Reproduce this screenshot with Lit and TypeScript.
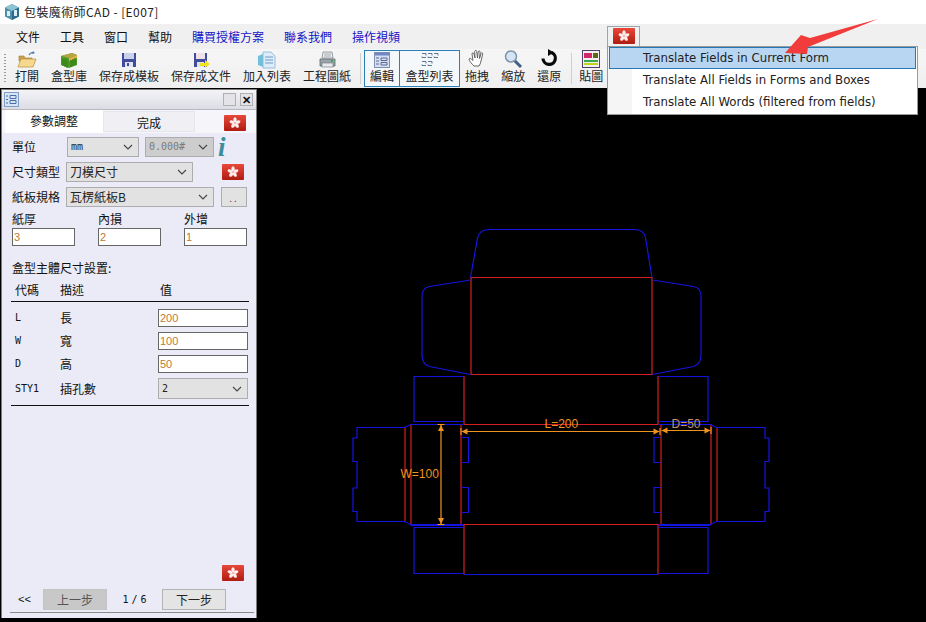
import { LitElement, html, css, svg } from "lit";
import { customElement } from "lit/decorators.js";

const flower = html`<svg class="petals" viewBox="0 0 22 16">
  ${[0, 72, 144, 216, 288].map(
    (a) => svg`<path transform="rotate(${a} 11 8)" d="M11 8C8.800 6.600 8.700 3.800 10.600 2.300C12.800 2.500 13.800 5.200 11 8Z" fill="#fdeeee"/>`
  )}
  <circle cx="11" cy="8" r="1" fill="#f4a8a0"/>
</svg>`;

const chevron = html`<svg class="chev" viewBox="0 0 10 6"><path d="M1 1l4 4 4-4" fill="none" stroke="#444" stroke-width="1.1"/></svg>`;

const icons: Record<string, unknown> = {
  open: svg`<svg viewBox="0 0 20 18" width="20" height="18">
    <path d="M12 4c1-2 3-3 5-2" fill="none" stroke="#4a7fb0" stroke-width="1.2"/><path d="M16 0l2 2-3 1z" fill="#4a7fb0"/>
    <path d="M2 5h5l1 2h7v3H2z" fill="#c9a24e" stroke="#a07c30" stroke-width=".6"/>
    <path d="M1 16l3-8h15l-3 8z" fill="#f6d98e" stroke="#b58f3e" stroke-width=".7"/></svg>`,
  box: svg`<svg viewBox="0 0 20 18" width="20" height="18">
    <path d="M2 5l11-3 5 2v10l-8 3-8-3z" fill="#4f9a26"/>
    <path d="M2 5l8 2 8-3-5-2z" fill="#b9a445"/>
    <path d="M10 7l8-3v3l-8 3z" fill="#e0b040"/>
    <path d="M4 8v7M6 8v8M8 9v8M12 9v7M14 8v7M16 7v7" stroke="#2d7a12" stroke-width="1"/></svg>`,
  save: svg`<svg viewBox="0 0 20 18" width="20" height="18">
    <rect x="3" y="2" width="14" height="14" fill="#3f4d9c"/><rect x="5" y="2" width="10" height="6" fill="#c9d2ea"/>
    <rect x="6" y="11" width="8" height="5" fill="#dfe3ee"/><rect x="8" y="12" width="2" height="3" fill="#3f4d9c"/></svg>`,
  saveAs: svg`<svg viewBox="0 0 20 18" width="20" height="18">
    <rect x="3" y="2" width="13" height="14" fill="#3f4d9c"/><rect x="5" y="2" width="9" height="6" fill="#f0e0e8"/>
    <rect x="6" y="11" width="7" height="5" fill="#dfe3ee"/>
    <path d="M9 12h5v-3l5 4-5 4v-2H9z" fill="#f2e21a"/></svg>`,
  list: svg`<svg viewBox="0 0 20 18" width="20" height="18">
    <path d="M1 5l5-2v13l-5-2z" fill="#6fc0d8"/>
    <path d="M6 1h8l4 4v12H6z" fill="#dcecf8" stroke="#88b4d8" stroke-width=".8"/>
    <path d="M8 6h8M8 9h8M8 12h8" stroke="#6f9cc8" stroke-width="1"/></svg>`,
  print: svg`<svg viewBox="0 0 20 18" width="20" height="18">
    <path d="M6 1h9l1 6H5z" fill="#f0f0f0" stroke="#808890" stroke-width=".8"/>
    <path d="M7 3h7M7 5h7" stroke="#909aa4" stroke-width=".8"/>
    <path d="M3 8h15v7H3z" fill="#9aa4a8" stroke="#5e686e" stroke-width=".8"/>
    <rect x="5" y="12" width="11" height="4" fill="#e6eaec" stroke="#6a7478" stroke-width=".6"/>
    <rect x="14" y="9" width="2" height="2" fill="#30b048"/></svg>`,
  edit: svg`<svg viewBox="0 0 20 18" width="20" height="18">
    <rect x="2.500" y="1.500" width="15" height="15" fill="#d8dff0" stroke="#7f8fb0"/>
    <rect x="3" y="2" width="14" height="2.500" fill="#6f87c4"/>
    <path d="M4 7h3M4 10h3M4 13h3M9 7h6v2.500H9zM9 11.500h6V14H9z" fill="none" stroke="#4a5f90" stroke-width=".9"/></svg>`,
  grid: svg`<svg viewBox="0 0 20 18" width="20" height="18">
    ${[[2, 2], [8, 2], [14, 2], [2, 10], [8, 10]].map(
      ([x, y]) => svg`<path d="M${x} ${y + 0.5}h4v2M${x + 4} ${y + 4.5}h-4v-1" fill="none" stroke="#5f7694" stroke-width="1"/>`
    )}</svg>`,
  hand: svg`<svg viewBox="0 0 20 20" width="20" height="20">
    <path d="M7 17c-2-2-5-5-5-7 1-1 2-.5 4 1.500L5 5c0-1.500 1.500-1.500 2 0l1 4-.3-6.500c0-1.500 2-1.500 2 0L10.500 9l.7-6c.2-1.500 2-1.300 1.900.2L12.500 9.500l1.500-5c.5-1.300 2-.8 1.700.5L14 12c-.3 2-1 3.500-2 5z" fill="#fff" stroke="#555" stroke-width=".9"/></svg>`,
  zoom: svg`<svg viewBox="0 0 20 20" width="20" height="20">
    <path d="M11 11l7 7" stroke="#3f5f88" stroke-width="3"/>
    <circle cx="8" cy="7.500" r="5.500" fill="#d4e6f6" stroke="#7f93a8" stroke-width="1.500"/></svg>`,
  undo: svg`<svg viewBox="0 0 20 20" width="20" height="20">
    <path d="M12.500 3.500A6.200 6.200 0 1 1 4 9.500" fill="none" stroke="#0a0a0a" stroke-width="3.200"/>
    <path d="M9 0l6 3.500L9 7z" fill="#0a0a0a"/></svg>`,
  paste: svg`<svg viewBox="0 0 20 20" width="20" height="20">
    <rect x="1.500" y="1.500" width="17" height="17" fill="#f4eef4" stroke="#50406a"/>
    <rect x="3" y="4" width="8" height="5" fill="#d02868"/><rect x="12" y="4" width="5" height="5" fill="#5a6a10"/>
    <rect x="3" y="11" width="14" height="2" fill="#38a848"/><rect x="3" y="14" width="14" height="2" fill="#b8d818"/></svg>`,
};

const tools1 = [
  ["open", "打開"], ["box", "盒型庫"], ["save", "保存成模板"], ["saveAs", "保存成文件"], ["list", "加入列表"], ["print", "工程圖紙"],
];

const BLUE = "#1414e0";
const RED = "#d42020";
const ORANGE = "#f0921e";

const blueLines = [
  "M471 277.500L478 238C479.500 232 484 229.500 490 229.500H635C641 229.500 645 232 646 238L652.500 277.500",
  "M471 280L430 286.500C425 287.500 422.500 291 422.500 296V355C422.500 361 425 365 430 366.500L471 374.500",
  "M653 280L694 286.500C699 287.500 701.500 291 701.500 296V355C701.500 361 699 365 694 366.500L653 374.500",
  "M464 376.500H414.500V421.500H464",
  "M659 376.500H708.500V421.500H659",
  "M464 422.500V424.500H411L405 427.500H357.500V438H353.500V461.500H357.500V488H353.500V511.500H357.500V521.500H405L411 524.500H464",
  "M411 525.500H464",
  "M659 424.500H711L717 427.500H765.500V438H769.500V461.500H765.500V488H769.500V511.500H765.500V521.500H717L711 524.500H659",
  "M659 525.500H711",
  "M461.500 437.500H469V462.500H461.500",
  "M461.500 487.500H469V512.500H461.500",
  "M661 437.500H654.500V462.500H661",
  "M661 487.500H654.500V512.500H661",
  "M464 527.500H414.500V573.500H464",
  "M659 527.500H708.500V573.500H659",
  "M464.500 574.500H658.500",
];
const redLines = [
  "M471.500 277.500H652.500V374.500H471.500Z",
  "M464.500 376V424.500H658.500V376",
  "M461.500 424.500V524.500H661.500V424.500",
  "M661.500 424.500H711.500V524.500",
  "M411.500 424.500V524.500M405.500 427V521.500M717.500 427V521.500",
  "M464.500 525V574.500M658.500 525V574.500",
];

@customElement("app-root")
export class AppRoot extends LitElement {
  static styles = css`
    :host { display: block; position: relative; width: 926px; height: 622px; overflow: hidden; background: #000;
      font-family: "Noto Sans CJK TC", "Noto Sans", sans-serif; font-size: 12px; color: #111; line-height: 14px; }
    .flag { position: relative; display: block; width: 22px; height: 16px; flex: none; border-radius: 1px;
      background: linear-gradient(#e8483a, #b01c10); }
    .petals { display: block; width: 22px; height: 16px; }
    .titlebar { height: 24px; background: #fff; display: flex; align-items: center; padding-left: 4px; gap: 4px;
      font-size: 12px; color: #222; }
    .titlebar .latin { letter-spacing: .4px; }
    .menubar { height: 25px; background: #f0f0f0; display: flex; align-items: center; gap: 20px; padding-left: 16px; }
    .menubar .link { color: #1414c8; }
    .toolbar { height: 39px; background: linear-gradient(#f6f6f6, #efefef); display: flex; align-items: stretch; box-sizing: border-box; padding-top: 1px; }
    .grip { width: 2px; margin: 4px 3px 5px 4px; background: repeating-linear-gradient(#9a9a9a 0 1px, transparent 1px 3px); }
    .tool { display: flex; flex-direction: column; align-items: center; padding: 0 6px; height: 37px; box-sizing: border-box; white-space: nowrap; color: #222; }
    .tool .ic { height: 19px; display: flex; align-items: flex-end; }
    .tool.on { border: 1px solid #2a80b8; padding: 0 5px; background: #f5f8fb; }
    .tool.on .ic { height: 18px; }
    .tool.on + .tool.on { margin-left: -1px; width: 61px; }
    .tool.after { margin-left: -1px; }
    .sep { width: 1px; margin: 3px 3px 4px; background: #cfcfcf; }
    .sep.b { margin: 3px 1px 4px 4px; }
    .main { height: 534px; display: flex; background: #000; }
    .panel { width: 256px; height: 529px; margin: 1px 0 0 1px; box-sizing: border-box; flex: none; border: 1px solid #7c7c7c; border-bottom: 0;
      background: #eaebf6; display: flex; flex-direction: column; }
    .canvas { flex: 1; display: block; width: 668px; height: 534px; margin-left: 1px; }
    .ptitle { height: 20px; flex: none; box-sizing: border-box; border-bottom: 1px solid #b8b8c0; background: linear-gradient(#f4f4f7, #dcdde4); display: flex; align-items: center; padding: 0 3px 0 2px; }
    .ptitle .winbtn { width: 13px; height: 13px; box-sizing: border-box; border: 1px solid #b0b0b0; background: #e4e4e8; margin-left: 4px; display: grid; place-items: center; font: bold 11px/10px "Liberation Sans", sans-serif; color: #111; }
    .ptitle .winbtn.first { margin-left: auto; }
    .tabs { height: 23px; flex: none; display: flex; align-items: flex-start; padding-left: 3px; background: #f6f6fa; box-sizing: border-box; }
    .tab { box-sizing: border-box; height: 23px; width: 98px; background: #fff; text-align: center; padding-top: 4px; }
    .tab.off { width: 92px; height: 21px; margin-top: 1px; background: #f0f0f4; border: 1px solid #e6e6ec; padding-top: 4px; }
    .tabs .flag { margin: 5px 0 0 29px; }
    .form { padding: 4px 9px 0 10px; flex: 1; display: flex; flex-direction: column; }
    .row { display: flex; align-items: center; height: 20px; margin-bottom: 5px; }
    .lab1 { width: 55px; }
    .lab { width: 54px; }
    .sel { box-sizing: border-box; display: flex; align-items: center; height: 20px; border: 1px solid #adadad; background: #e2e2e2; padding: 0 5px 0 3px; color: #222; white-space: nowrap; }
    .sel .chev { margin-left: auto; width: 10px; height: 6px; flex: none; }
    .sel.dis { background: #cdcdcd; color: #7a7a7a; }
    .mono { font-family: "DejaVu Sans Mono", "Liberation Mono", monospace; font-size: 10px; }
    .w72 { width: 72px; } .w69 { width: 69px; margin-left: 6px; } .w127 { width: 127px; } .w148 { width: 148px; }
    .info { font: italic bold 27px/20px "Liberation Serif", serif; color: #3a8f9c; margin-left: 4px; }
    .row .flag { margin-left: 29px; }
    .dots { box-sizing: border-box; width: 26px; height: 20px; margin-left: 7px; border: 1px solid #adadad; background: #e2e2e2; text-align: center; line-height: 20px; font-size: 10px; letter-spacing: 2px; color: #444; }
    .triple { display: grid; grid-template-columns: repeat(3, 86px); }
    .triple .t { height: 16px; }
    .field { box-sizing: border-box; height: 18px; border: 1px solid #666; background: #fff; color: #c07a38; font: 11px/16px "Liberation Sans", sans-serif; padding-left: 1px; }
    .triple .field { width: 63px; }
    .sect { margin-top: 15px; height: 14px; }
    .thead { display: grid; grid-template-columns: 45px 100px 1fr; padding-left: 3px; margin-top: 8px; height: 18px; }
    .rule { height: 0; border-top: 1px solid #111; margin: 0 -1px 1px; width: 238px; }
    .trow { display: grid; grid-template-columns: 45px 98px 90px; align-items: center; height: 18px; padding-left: 3px; margin-bottom: 5px; width: 236px; }
    .tbody { padding-top: 6px; }
    .trow .sel { height: 21px; width: 90px; }
    .trow.last { margin-bottom: 6px; height: 21px; }
    .spacer { flex: 1; }
    .flagrow { display: flex; justify-content: flex-end; padding-right: 3px; margin-bottom: 8px; }
    .nav { display: flex; align-items: center; height: 21px; margin-bottom: 2px; }
    .prev { margin-left: 6px; width: 13px; font-family: "Liberation Mono", monospace; font-size: 11px; }
    .btn { box-sizing: border-box; width: 64px; height: 21px; text-align: center; line-height: 19px; border: 1px solid #b4b4b4; background: #e4e4e4; color: #222; }
    .btn.dim { background: #c8c8c8; border-color: #c4c4c4; margin-left: 12px; color: #555; }
    .page { width: 55px; text-align: center; font-family: "DejaVu Sans Mono", monospace; font-size: 10px; word-spacing: -3px; }
    .bottomline { height: 5px; flex: none; border-top: 1px solid #8a8a8a; margin: 0 2px 0 8px; }
    .popup-tab { position: absolute; left: 607px; top: 26px; width: 33px; height: 21px; box-sizing: border-box; border: 1px solid #9aa6b0; border-bottom: 0; background: #f0f0f0; padding: 1px 0 0 5px; }
    .popup { position: absolute; left: 607px; top: 46px; width: 311px; height: 69px; box-sizing: border-box; border: 1px solid #9a9a9a; padding: 0 1px 0 1px; background: linear-gradient(90deg, #f5f5f5 0 24px, #fff 24px); font: 11.750px/20px "DejaVu Sans", sans-serif; color: #222; letter-spacing: 0; }
    .popup div { box-sizing: border-box; height: 22px; padding: 0 0 0 33px; border: 1px solid transparent; white-space: nowrap; }
    .popup .hi { background: #b8d6f2; border-color: #2478b4; }
    .arrow { position: absolute; left: 0; top: 0; width: 926px; height: 622px; pointer-events: none; }
    .dim-t { font: 12px "Liberation Sans", sans-serif; fill: #f0921e; }
    .dim-d { font: 12px "Liberation Sans", sans-serif; fill: #c89070; }
  `;

  private tool(t: string[], cls = "") {
    return html`<div class="tool ${cls}"><span class="ic">${icons[t[0]]}</span><span>${t[1]}</span></div>`;
  }

  private diagram() {
    return svg`<svg class="canvas" viewBox="259 88 667 534" fill="none" stroke-width="1.200">
      ${redLines.map((d) => svg`<path d=${d} stroke=${RED}/>`)}
      ${blueLines.map((d) => svg`<path d=${d} stroke=${BLUE}/>`)}
      <path d="M462 431.500H660M662 430.500H711M441.500 425V524" stroke=${ORANGE}/>
      <path d="M462 431.500l6-3v6zM660 431.500l-6-3v6zM662 430.500l6-3v6zM711 430.500l-6-3v6zM441.500 425l-3 6h6zM441.500 524l-3-6h6z" fill=${ORANGE}/>
      <path d="M438 424.500h7M438 524.500h7M461.500 428v7M660.500 428v7M711.500 427v7" stroke=${ORANGE}/>
      <text class="dim-t" x="545" y="428">L=200</text>
      <text class="dim-d" x="672" y="428">D=50</text>
      <text class="dim-t" x="401" y="478">W=100</text>
    </svg>`;
  }

  render() {
    return html`
      <div class="titlebar">
        <svg width="16" height="16" viewBox="0 0 16 16">
          <path d="M8 0l7 3.500v9L8 16l-7-3.500v-9z" fill="#4e8fa8"/><path d="M8 0l7 3.500L8 7 1 3.500z" fill="#8cc4d4"/>
          <path d="M8 7v9l7-3.500v-9z" fill="#2f6a88"/><path d="M3 7h3v5H3zM10 6h3v6h-3z" fill="#d8eef4"/>
        </svg>
        <span class="latin">包裝魔術師CAD - [E007]</span>
      </div>
      <div class="menubar">
        <span>文件</span><span>工具</span><span>窗口</span><span>幫助</span>
        <span class="link">購買授權方案</span><span class="link">聯系我們</span><span class="link">操作視頻</span>
      </div>
      <div class="toolbar">
        <div class="grip"></div>
        ${tools1.map((t) => this.tool(t))}
        <div class="sep"></div>
        ${this.tool(["edit", "編輯"], "on")}
        ${this.tool(["grid", "盒型列表"], "on")}
        ${this.tool(["hand", "拖拽"], "after")}
        ${this.tool(["zoom", "縮放"])}
        ${this.tool(["undo", "還原"])}
        <div class="sep b"></div>
        ${this.tool(["paste", "貼圖"])}
      </div>
      <div class="main">
        <div class="panel">
          <div class="ptitle">
            <svg width="15" height="15" viewBox="0 0 15 15"><rect x=".5" y=".5" width="14" height="14" fill="#d8e4f4" stroke="#7f9fc8"/><path d="M2 4h2M2 7.500h2M2 11h2M6 3.500h6v3H6zM6 8.500h6v3H6z" fill="none" stroke="#4a6fa8"/></svg>
            <span class="winbtn first"></span>
            <span class="winbtn">✕</span>
          </div>
          <div class="tabs">
            <div class="tab">參數調整</div>
            <div class="tab off">完成</div>
            <span class="flag">${flower}</span>
          </div>
          <div class="form">
            <div class="row">
              <span class="lab1">單位</span>
              <div class="sel w72 mono">mm${chevron}</div>
              <div class="sel dis w69 mono">0.000#${chevron}</div>
              <span class="info">i</span>
            </div>
            <div class="row">
              <span class="lab">尺寸類型</span>
              <div class="sel w127">刀模尺寸${chevron}</div>
              <span class="flag">${flower}</span>
            </div>
            <div class="row">
              <span class="lab">紙板規格</span>
              <div class="sel w148">瓦楞紙板B${chevron}</div>
              <div class="dots">..</div>
            </div>
            <div class="triple">
              <div class="t">紙厚</div><div class="t">內損</div><div class="t">外增</div>
              <div class="field">3</div><div class="field">2</div><div class="field">1</div>
            </div>
            <div class="sect">盒型主體尺寸設置:</div>
            <div class="thead"><span>代碼</span><span>描述</span><span>值</span></div>
            <div class="rule"></div>
            <div class="tbody">
              <div class="trow"><span class="mono">L</span><span>長</span><div class="field">200</div></div>
              <div class="trow"><span class="mono">W</span><span>寬</span><div class="field">100</div></div>
              <div class="trow"><span class="mono">D</span><span>高</span><div class="field">50</div></div>
              <div class="trow last"><span class="mono">STY1</span><span>插孔數</span><div class="sel mono">2${chevron}</div></div>
            </div>
            <div class="rule"></div>
            <div class="spacer"></div>
            <div class="flagrow"><span class="flag">${flower}</span></div>
            <div class="nav">
              <span class="prev">&lt;&lt;</span>
              <div class="btn dim">上一步</div>
              <span class="page">1 / 6</span>
              <div class="btn">下一步</div>
            </div>
          </div>
          <div class="bottomline"></div>
        </div>
        ${this.diagram()}
      </div>
      <div class="popup-tab"><span class="flag">${flower}</span></div>
      <div class="popup">
        <div class="hi">Translate Fields in Current Form</div>
        <div>Translate All Fields in Forms and Boxes</div>
        <div>Translate All Words (filtered from fields)</div>
      </div>
      <svg class="arrow" viewBox="0 0 926 622"><path d="M878 19L810 38L801 35L785 53L807 54L808 47Z" fill="#f23c3c"/></svg>
    `;
  }
}
